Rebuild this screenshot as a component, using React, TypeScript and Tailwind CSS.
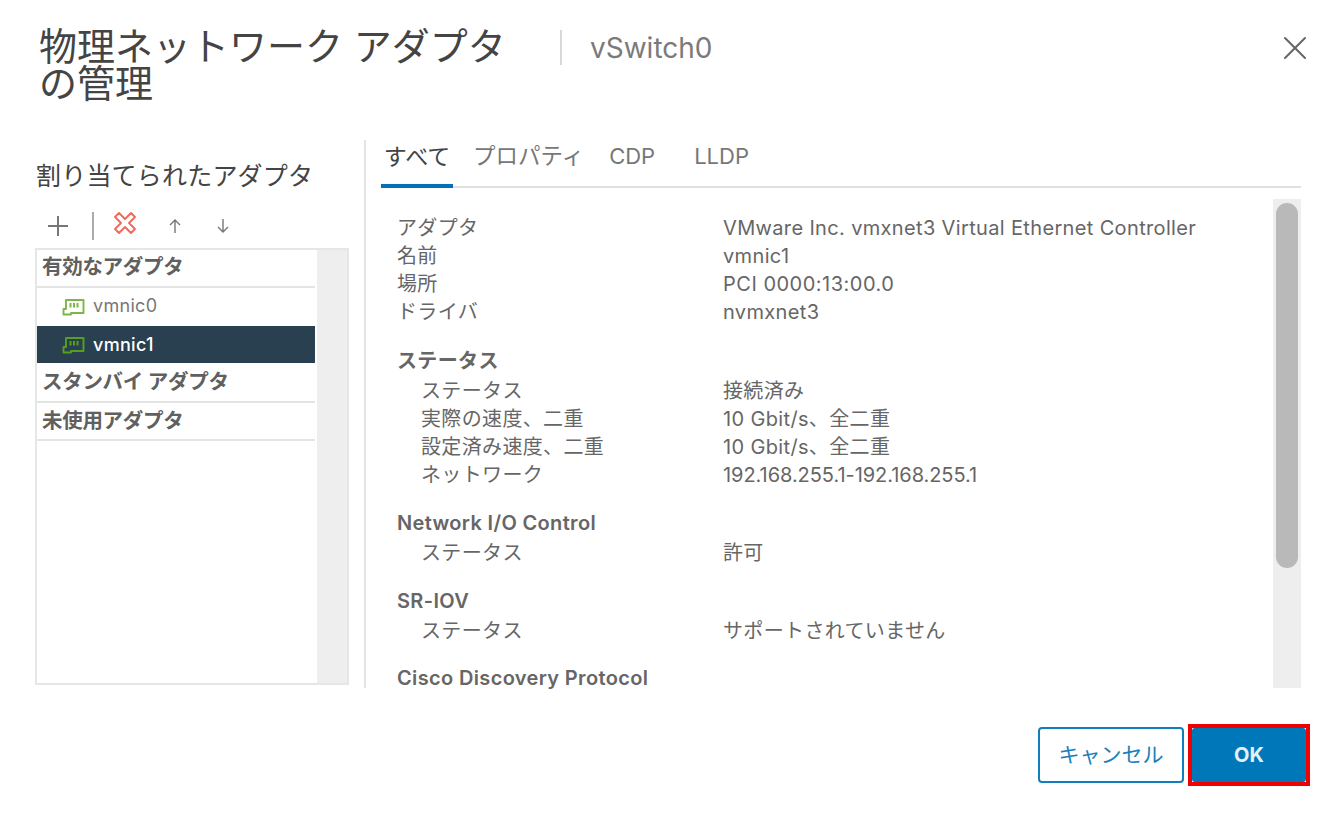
import { X } from "lucide-react";

const font = "font-['Inter','Noto_Sans_CJK_JP',sans-serif]";

function NicIcon({ className }: { className: string }) {
  return (
    <svg viewBox="0 0 23 18" fill="none" stroke="currentColor" strokeWidth="1.9" className={className}>
      <path d="M4 2 H21.5 V15 H9 V16.5 H1.5 V11 H4 Z" strokeLinejoin="round" />
      <path d="M8.5 5 V9.5 M12 5 V9.5 M15.5 5 V9.5" strokeWidth="2" />
    </svg>
  );
}

function Row({ label, value, sub, valueClass }: { label: string; value: string; sub?: boolean; valueClass?: string }) {
  return (
    <div className="flex h-[28px] items-center text-[20px] tracking-[0.35px] text-[#666]">
      <div className={sub ? "w-[326px] pl-[24px]" : "w-[326px]"}>{label}</div>
      <div className={valueClass}>{value}</div>
    </div>
  );
}

function SectionTitle({ children }: { children: string }) {
  return <div className="mb-[2px] flex h-[28px] items-center text-[20px] font-semibold tracking-[0.35px] text-[#666]">{children}</div>;
}

function GroupRow({ children, className }: { children: string; className: string }) {
  return (
    <div className={`${className} flex items-center border-b-2 border-[#e4e4e4] pl-[5px] text-[20.5px] font-semibold tracking-[-0.3px] text-[#606060]`}>
      {children}
    </div>
  );
}

export default function App() {
  return (
    <div className={`${font} flex h-[814px] w-[1336px] flex-col overflow-hidden bg-white`}>
      {/* Header */}
      <div className="flex h-[140px] items-start pl-[39px] pr-[21px] pt-[28px]">
        <h1 className="w-[481px] text-[38px] leading-[37px] text-[#444]">
          物理ネットワーク アダプタ の管理
        </h1>
        <div className="ml-[40px] mt-[2px] h-[35px] w-[2px] bg-[#d8d8d8]" />
        <div className="ml-[28px] text-[28px] leading-[40px] text-[#7a7a7a]">vSwitch0</div>
        <X className="ml-auto size-[40px] text-[#666]" strokeWidth={1.2} />
      </div>

      {/* Body */}
      <div className="flex h-[548px] pl-[35px]">
        <div className="flex w-[314px] flex-col">
          <div className="flex h-[52px] items-end pl-[1px] text-[25px] leading-[32px] tracking-[0.2px] text-[#444]">割り当てられたアダプタ</div>
          <div className="flex h-[56px] items-center pl-[11px] pt-[12px] text-[#777]">
            <svg viewBox="0 0 24 24" className="size-[24px]" stroke="currentColor" strokeWidth="2">
              <path d="M12 2 V22 M2 12 H22" />
            </svg>
            <div className="ml-[22px] h-[28px] w-[2px] bg-[#aaa]" />
            <svg viewBox="0 0 24 24" fill="none" className="ml-[19px] -mt-[6px] size-[24px] text-[#f0695a]" stroke="currentColor" strokeWidth="1.9" strokeLinejoin="round">
              <path d="M6 2 L12 8 L18 2 L22 6 L16 12 L22 18 L18 22 L12 16 L6 22 L2 18 L8 12 L2 6 Z" />
            </svg>
            <svg viewBox="0 0 16 16" fill="none" className="ml-[30px] size-[16px]" stroke="currentColor" strokeWidth="1.4">
              <path d="M8 15 V2 M3 7 L8 2 L13 7" />
            </svg>
            <svg viewBox="0 0 16 16" fill="none" className="ml-[32px] size-[16px]" stroke="currentColor" strokeWidth="1.4">
              <path d="M8 1 V14 M3 9 L8 14 L13 9" />
            </svg>
          </div>
          <div className="flex h-[437px] border-2 border-[#e6e6e6]">
            <div className="w-[278px]">
              <GroupRow className="h-[38px] pb-[2px]">有効なアダプタ</GroupRow>
              <div className="flex h-[38px] items-center pb-[3px] pl-[25px] text-[18px] tracking-[0.3px] text-[#777]">
                <NicIcon className="mt-[3px] h-[18px] w-[23px] text-[#7ab648]" />
                <span className="ml-[8px]">vmnic0</span>
              </div>
              <div className="flex h-[37px] items-center bg-[#28404f] pb-[1px] pl-[25px] text-[18px] font-medium tracking-[0.3px] text-white">
                <NicIcon className="mt-[2px] h-[18px] w-[23px] text-[#56a01e]" />
                <span className="ml-[8px]">vmnic1</span>
              </div>
              <GroupRow className="h-[40px]">スタンバイ アダプタ</GroupRow>
              <GroupRow className="h-[38px]">未使用アダプタ</GroupRow>
            </div>
            <div className="ml-[2px] flex-1 bg-[#eeeeee]" />
          </div>
        </div>

        <div className="ml-[15px] w-[2px] bg-[#e4e4e4]" />

        {/* Right pane */}
        <div className="ml-[15px] flex w-[920px] flex-col">
          <div className="flex h-[48px] border-b-2 border-[#e0e0e0] text-[#777]">
            <div className="-mb-[2px] flex h-[48px] w-[72px] items-center justify-center border-b-[4px] border-[#0072b5] pb-[10px] text-[23px] text-[#444]">すべて</div>
            <div className="ml-[20px] flex items-center pb-[14px] text-[22.5px]">プロパティ</div>
            <div className="ml-[25px] flex items-center pb-[14px] text-[22px]">CDP</div>
            <div className="ml-[39px] flex items-center pb-[14px] text-[22px]">LLDP</div>
          </div>
          <div className="mt-[11px] flex min-h-0 flex-1">
            <div className="min-w-0 flex-1 pl-[16px] pt-[15px]">
              <Row label="アダプタ" value="VMware Inc. vmxnet3 Virtual Ethernet Controller" />
              <Row label="名前" value="vmnic1" />
              <Row label="場所" value="PCI 0000:13:00.0" valueClass="tracking-[0.5px]" />
              <Row label="ドライバ" value="nvmxnet3" />
              <div className="mt-[21px]"><SectionTitle>ステータス</SectionTitle></div>
              <Row sub label="ステータス" value="接続済み" />
              <Row sub label="実際の速度、二重" value="10 Gbit/s、全二重" />
              <Row sub label="設定済み速度、二重" value="10 Gbit/s、全二重" />
              <Row sub label="ネットワーク" value="192.168.255.1-192.168.255.1" valueClass="tracking-[-0.05px]" />
              <div className="mt-[20px]"><SectionTitle>Network I/O Control</SectionTitle></div>
              <Row sub label="ステータス" value="許可" />
              <div className="mt-[20px]"><SectionTitle>SR-IOV</SectionTitle></div>
              <Row sub label="ステータス" value="サポートされていません" />
              <div className="mt-[23px] h-[20px] text-[20px] font-semibold leading-[20px] tracking-[0.35px] text-[#666]">Cisco Discovery Protocol</div>
            </div>
            <div className="w-[28px] bg-[#eeeeee] px-[3px] pt-[4px]">
              <div className="h-[365px] rounded-full bg-[#b9b9b9]" />
            </div>
          </div>
        </div>
      </div>

      {/* Footer */}
      <div className="flex flex-1 items-start justify-end pr-[26px] pt-[36px]">
        <button className="mt-[3px] h-[56px] w-[146px] rounded-[4px] border-2 border-[#0f7fbd] text-[21px] text-[#1a7fba]">キャンセル</button>
        <div className="ml-[4px] border-[4px] border-[#f00000]">
          <button className="block h-[54px] w-[114px] rounded-[3px] bg-[#0077b8] text-[20px] font-bold text-[#e4f0f7]">OK</button>
        </div>
      </div>
    </div>
  );
}
